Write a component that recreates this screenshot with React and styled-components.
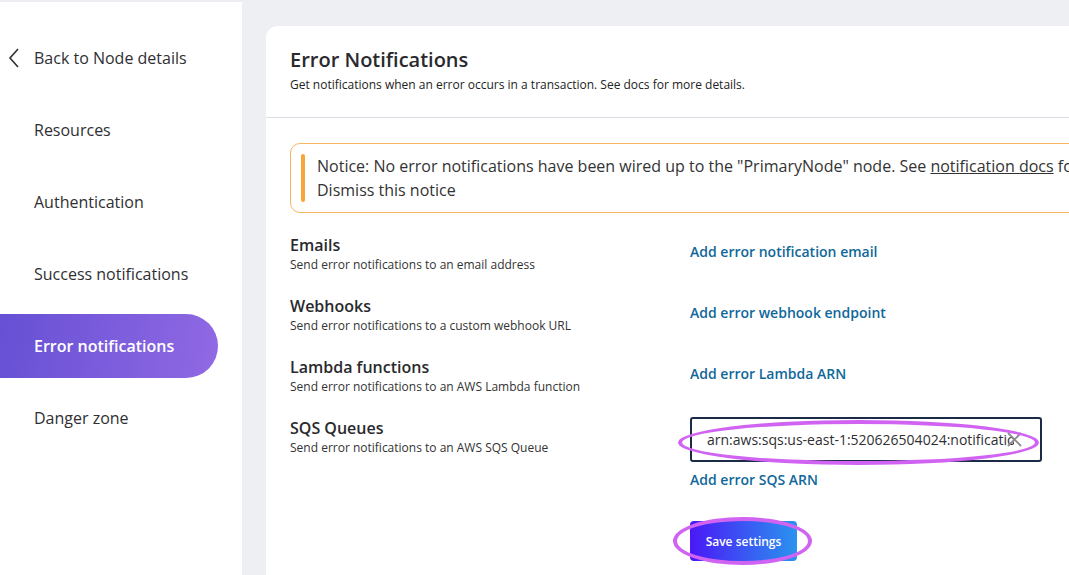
import React from 'react';
import styled, { createGlobalStyle } from 'styled-components';

const GlobalStyle = createGlobalStyle`
  html, body {
    margin: 0;
    padding: 0;
    height: 100%;
    overflow: hidden;
    font-family: "Open Sans", "Liberation Sans", sans-serif;
    color: #2f2f33;
    background: #fff;
  }
  * { box-sizing: border-box; }
`;

const Page = styled.div`
  display: flex;
  height: 100vh;
  border-top: 2px solid #eceef1;
`;

const Sidebar = styled.nav`
  width: 242px;
  flex-shrink: 0;
  display: flex;
  flex-direction: column;
  gap: 8px;
  padding-top: 24px;
  background: #fff;
`;

const NavItem = styled.div`
  height: 64px;
  width: 218px;
  display: flex;
  align-items: center;
  padding-left: 34px;
  font-size: 16px;
  color: ${p => (p.$active ? '#fff' : '#2f2f33')};
  font-weight: ${p => (p.$active ? 600 : 400)};
  border-radius: 0 32px 32px 0;
  background: ${p =>
    p.$active ? 'linear-gradient(100deg, #6650d4 0%, #9169e4 100%)' : 'transparent'};
  position: relative;
  > svg {
    position: absolute;
    left: 8px;
  }
`;

const Main = styled.main`
  flex: 1;
  background: #eeeff2;
  padding: 24px 0 0 24px;
  overflow: hidden;
`;

const Card = styled.section`
  width: 880px;
  height: 100%;
  background: #fff;
  border-radius: 12px 0 0 0;
`;

const CardHeader = styled.header`
  padding: 20px 24px 0;
  height: 92px;
  border-bottom: 1px solid #dcdbe4;
`;

const Title = styled.h1`
  margin: 0;
  font-size: 20px;
  line-height: 28px;
  font-weight: 600;
  color: #2a2a2e;
`;

const Subtitle = styled.p`
  margin: 3px 0 0;
  font-size: 12px;
  line-height: 16px;
  color: #222;
`;

const CardBody = styled.div`
  padding: 25px 24px 0;
`;

const Notice = styled.div`
  display: flex;
  gap: 12px;
  padding: 10px 10px;
  border: 1px solid #f8b660;
  border-radius: 10px;
  font-size: 16px;
  line-height: 24px;
  color: #333;
  white-space: nowrap;
  &::before {
    content: '';
    width: 4px;
    flex-shrink: 0;
    border-radius: 2px;
    background: #f7a63c;
  }
  a {
    color: inherit;
    text-decoration: underline;
  }
`;

const Settings = styled.div`
  display: flex;
  flex-direction: column;
  gap: 21px;
  margin-top: 21px;
`;

const Row = styled.div`
  display: grid;
  grid-template-columns: 400px 1fr;
`;

const RowTitle = styled.div`
  font-size: 16px;
  line-height: 22px;
  font-weight: 600;
  color: #2a2a2e;
`;

const RowDesc = styled.div`
  font-size: 12px;
  line-height: 18px;
  color: #333;
`;

const Actions = styled.div`
  display: flex;
  flex-direction: column;
  align-items: flex-start;
`;

const LinkButton = styled.button`
  border: none;
  background: none;
  padding: 8px 0;
  font-family: inherit;
  font-size: 14px;
  line-height: 20px;
  font-weight: 600;
  color: #10679a;
  cursor: pointer;
`;

const InputWrap = styled.div`
  position: relative;
  width: 352px;
  height: 45px;
  border: 2px solid #1b2a47;
  border-radius: 3px;
  display: flex;
  align-items: center;
  > svg {
    position: absolute;
    right: 18px;
    top: 13px;
  }
`;

const TextInput = styled.input`
  width: 100%;
  border: none;
  outline: none;
  background: transparent;
  padding: 0 26px 0 15px;
  font-family: inherit;
  font-size: 14px;
  color: #2f2f33;
`;

const Ring = styled.div`
  position: absolute;
  border: 4px solid #d163f3;
  border-radius: 50%;
  pointer-events: none;
`;

const SaveWrap = styled.div`
  position: relative;
  margin-top: 23px;
`;

const SaveButton = styled.button`
  width: 107px;
  height: 40px;
  border: none;
  border-radius: 4px;
  background: linear-gradient(90deg, #4a18f6 0%, #2a93ef 100%);
  color: #fff;
  font-family: inherit;
  font-size: 12px;
  font-weight: 600;
`;

const rows = [
  { title: 'Emails', desc: 'Send error notifications to an email address', action: 'Add error notification email' },
  { title: 'Webhooks', desc: 'Send error notifications to a custom webhook URL', action: 'Add error webhook endpoint' },
  { title: 'Lambda functions', desc: 'Send error notifications to an AWS Lambda function', action: 'Add error Lambda ARN' },
];

const navItems = ['Resources', 'Authentication', 'Success notifications', 'Error notifications', 'Danger zone'];

const App = () => {
  return (
    <>
      <GlobalStyle />
      <Page>
        <Sidebar>
          <NavItem>
            <svg width="12" height="20" viewBox="0 0 12 20" fill="none">
              <polyline points="10,1 2,10 10,19" stroke="#2f2f33" strokeWidth="1.6" />
            </svg>
            Back to Node details
          </NavItem>
          {navItems.map(item => (
            <NavItem key={item} $active={item === 'Error notifications'}>
              {item}
            </NavItem>
          ))}
        </Sidebar>
        <Main>
          <Card>
            <CardHeader>
              <Title>Error Notifications</Title>
              <Subtitle>
                Get notifications when an error occurs in a transaction. See docs for more details.
              </Subtitle>
            </CardHeader>
            <CardBody>
              <Notice>
                <div>
                  Notice: No error notifications have been wired up to the "PrimaryNode" node. See{' '}
                  <a href="#docs">notification docs</a> for more information.
                  <div>Dismiss this notice</div>
                </div>
              </Notice>
              <Settings>
                {rows.map(r => (
                  <Row key={r.title}>
                    <div>
                      <RowTitle>{r.title}</RowTitle>
                      <RowDesc>{r.desc}</RowDesc>
                    </div>
                    <Actions>
                      <LinkButton>{r.action}</LinkButton>
                    </Actions>
                  </Row>
                ))}
                <Row>
                  <div>
                    <RowTitle>SQS Queues</RowTitle>
                    <RowDesc>Send error notifications to an AWS SQS Queue</RowDesc>
                  </div>
                  <Actions>
                    <InputWrap>
                      <TextInput readOnly value="arn:aws:sqs:us-east-1:520626504024:notifications-queue" />
                      <svg width="15" height="15" viewBox="0 0 15 15">
                        <path d="M1 1L14 14M14 1L1 14" stroke="#8a8a8e" strokeWidth="1.8" />
                      </svg>
                      <Ring style={{ left: -14, top: 1, width: 361, height: 45 }} />
                    </InputWrap>
                    <LinkButton>Add error SQS ARN</LinkButton>
                    <SaveWrap>
                      <SaveButton>Save settings</SaveButton>
                      <Ring style={{ left: -17, top: -4, width: 139, height: 48 }} />
                    </SaveWrap>
                  </Actions>
                </Row>
              </Settings>
            </CardBody>
          </Card>
        </Main>
      </Page>
    </>
  );
};

export default App;
